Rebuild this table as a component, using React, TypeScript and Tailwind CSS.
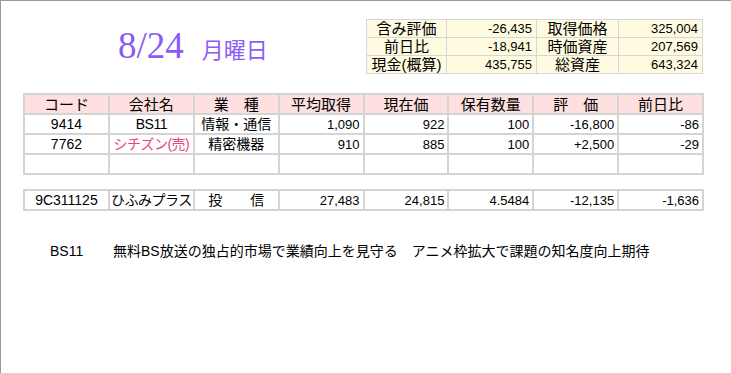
const jp = "font-['Liberation_Sans','Noto_Sans_CJK_JP',sans-serif]";

const summary = [
  ["含み評価", "-26,435", "取得価格", "325,004"],
  ["前日比", "-18,941", "時価資産", "207,569"],
  ["現金(概算)", "435,755", "総資産", "643,324"],
];

const headers = ["コード", "会社名", "業　種", "平均取得", "現在価", "保有数量", "評　価", "前日比"];

type Row = {
  code: string;
  name: string;
  sell?: boolean;
  kind: string;
  avg: string;
  price: string;
  qty: string;
  value: string;
  diff: string;
};

const holdings: Row[] = [
  { code: "9414", name: "BS11", kind: "情報・通信", avg: "1,090", price: "922", qty: "100", value: "-16,800", diff: "-86" },
  { code: "7762", name: "シチズン(売)", sell: true, kind: "精密機器", avg: "910", price: "885", qty: "100", value: "+2,500", diff: "-29" },
  { code: "", name: "", kind: "", avg: "", price: "", qty: "", value: "", diff: "" },
];

const fund: Row = {
  code: "9C311125",
  name: "ひふみプラス",
  kind: "投　　信",
  avg: "27,483",
  price: "24,815",
  qty: "4.5484",
  value: "-12,135",
  diff: "-1,636",
};

const cell = "border-2 border-[#d4d4d4] h-[20px] p-0 leading-none whitespace-nowrap overflow-hidden";

function DataRow({ row }: { row: Row }) {
  return (
    <tr className="bg-white">
      <td className={`${cell} text-center text-[14px]`}>{row.code}</td>
      <td className={`${cell} text-center text-[14px] tracking-[-0.5px] ${row.sell ? "text-[#e8457f]" : ""}`}>{row.name}</td>
      <td className={`${cell} text-center text-[14px]`}>{row.kind}</td>
      <td className={`${cell} text-right text-[13px] pr-[3px]`}>{row.avg}</td>
      <td className={`${cell} text-right text-[13px] pr-[3px]`}>{row.price}</td>
      <td className={`${cell} text-right text-[13px] pr-[3px]`}>{row.qty}</td>
      <td className={`${cell} text-right text-[13px] pr-[3px]`}>{row.value}</td>
      <td className={`${cell} text-right text-[13px] pr-[3px]`}>{row.diff}</td>
    </tr>
  );
}

export default function App() {
  return (
    <div className={`w-[731px] h-[373px] bg-white border-l border-t border-[#9a9a9a] text-black ${jp}`}>
      <div className="flex items-start">
        <div className="w-[365px] pt-[26px] pl-[117px] flex items-baseline">
          <span className="font-['Liberation_Serif',serif] text-[37px] leading-none text-[#8a5cf6]">8/24</span>
          <span className="ml-[18px] text-[22px] leading-none font-['Noto_Sans_CJK_JP',sans-serif] text-[#8d5cf7]">
            月曜日
          </span>
        </div>
        <table className="mt-[18px] border-collapse table-fixed">
          <tbody>
            {summary.map((r) => (
              <tr key={r[0]} className="bg-[#fffbe0]">
                <td className="w-[80px] h-[18px] border border-[#d6d6d6] text-center text-[15px] leading-none p-0">{r[0]}</td>
                <td className="w-[90px] h-[18px] border border-[#d6d6d6] text-right text-[13px] leading-none p-0 pr-[4px]">{r[1]}</td>
                <td className="w-[82px] h-[18px] border border-[#d6d6d6] text-center text-[15px] leading-none p-0">{r[2]}</td>
                <td className="w-[84px] h-[18px] border border-[#d6d6d6] text-right text-[13px] leading-none p-0 pr-[4px]">{r[3]}</td>
              </tr>
            ))}
          </tbody>
        </table>
      </div>

      <table className="ml-[22px] mt-[19px] w-[681px] table-fixed border-collapse">
        <thead>
          <tr className="bg-[#fde0df]">
            {headers.map((h) => (
              <th key={h} className={`${cell} font-normal text-[15px] text-center`}>
                {h}
              </th>
            ))}
          </tr>
        </thead>
        <tbody>
          {holdings.map((r, i) => (
            <DataRow key={i} row={r} />
          ))}
        </tbody>
      </table>

      <table className="ml-[22px] mt-[14px] w-[681px] table-fixed border-collapse">
        <tbody>
          <DataRow row={fund} />
        </tbody>
      </table>

      <div className="flex mt-[33px] text-[14px] leading-none">
        <span className="ml-[49px] w-[63px]">BS11</span>
        <span>無料BS放送の独占的市場で業績向上を見守る　アニメ枠拡大で課題の知名度向上期待</span>
      </div>
    </div>
  );
}
